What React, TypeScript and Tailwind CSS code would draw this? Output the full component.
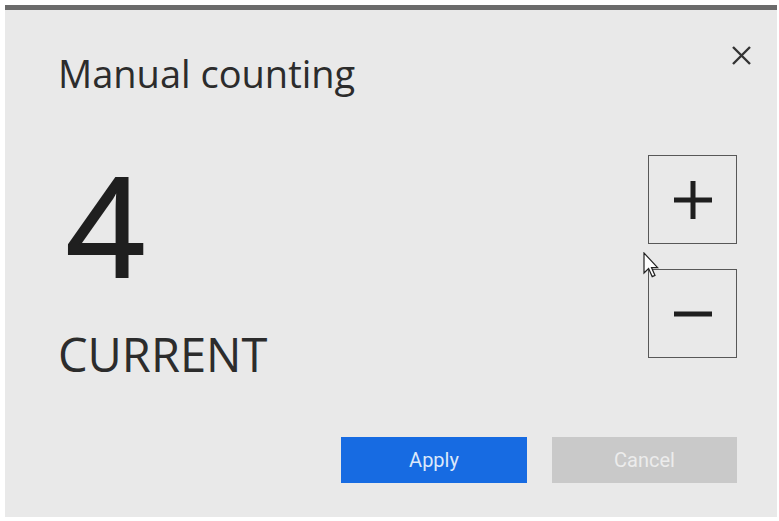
import { useState } from 'react'

function CloseIcon() {
  return (
    <svg width="21" height="21" viewBox="0 0 21 21" fill="none">
      <path d="M2 2L19 19M19 2L2 19" stroke="#333333" strokeWidth="2.4" strokeLinecap="butt" />
    </svg>
  )
}

function PlusIcon() {
  return (
    <svg width="40" height="40" viewBox="0 0 40 40" fill="none">
      <path d="M1 20H39M20 1V39" stroke="#1f1f1f" strokeWidth="5" />
    </svg>
  )
}

function MinusIcon() {
  return (
    <svg width="40" height="8" viewBox="0 0 40 8" fill="none">
      <path d="M1 4H39" stroke="#1f1f1f" strokeWidth="5" />
    </svg>
  )
}

function Pointer() {
  return (
    <svg width="16" height="26" viewBox="0 0 16 26" fill="none">
      <path
        d="M1 1V21L5.6 16.6L9.2 24.6L12 23.4L8.5 15.6H14.6Z"
        fill="#ffffff"
        stroke="#222222"
        strokeWidth="1.2"
        strokeLinejoin="miter"
      />
    </svg>
  )
}

export default function App() {
  const [count, setCount] = useState(4)

  return (
    <div className="h-[521px] w-[779px] bg-white pt-[5px] pl-[5px] pr-[2px]">
      <div className="relative h-[512px] border-t-[5px] border-[#6b6b6b] bg-[#e9e9e9] font-['Open_Sans',sans-serif] text-[#2c2c2c]">
        <div className="flex items-start justify-between pl-[53px] pr-[25px] pt-[35px]">
          <h1 className="mt-[9px] text-[38px] leading-[38px]">Manual counting</h1>
          <button className="h-[21px] w-[21px]">
            <CloseIcon />
          </button>
        </div>

        <div className="mt-[62px] flex justify-between pl-[53px] pr-[40px]">
          <div className="flex flex-col">
            {/* a thin text stroke gives the big counter a touch more weight */}
            <div className="ml-[8px] h-[138px] text-[138px] leading-[138px] text-[#1f1f1f] [-webkit-text-stroke:2px_#1f1f1f]">
              {count}
            </div>
            <div className="mt-[38px] text-[47px] leading-[48px]">CURRENT</div>
          </div>
          <div className="mt-[1px] flex flex-col gap-[25px]">
            <button
              onClick={() => setCount(count + 1)}
              className="flex h-[89px] w-[89px] items-center justify-center border border-[#585858]"
            >
              <PlusIcon />
            </button>
            <button
              onClick={() => setCount(Math.max(0, count - 1))}
              className="flex h-[89px] w-[89px] items-center justify-center border border-[#585858]"
            >
              <MinusIcon />
            </button>
          </div>
        </div>

        <div className="mt-[59px] flex justify-end gap-[25px] pr-[40px] font-['Roboto',sans-serif] text-[20px]">
          <button className="h-[46px] w-[186px] bg-[#176be2] text-[#dce8fa]">Apply</button>
          <button className="h-[46px] w-[185px] bg-[#c9c9c9] text-[#ececec]">Cancel</button>
        </div>

        <div className="pointer-events-none absolute left-[638px] top-[242px]">
          <Pointer />
        </div>
      </div>
    </div>
  )
}
